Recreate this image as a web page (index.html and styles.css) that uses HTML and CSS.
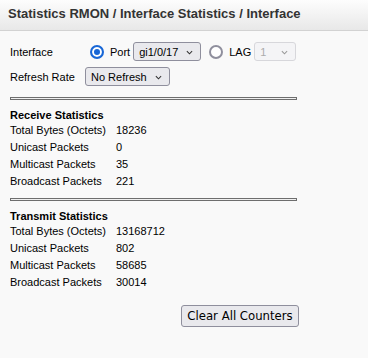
FILE: index.html
```html
<!DOCTYPE html>
<html lang="en">
<head>
	<meta charset="UTF-8">
	<title>Interface Statistics</title>
	<link rel="stylesheet" href="styles.css">
</head>
<body>
	<div class="title">Statistics RMON / Interface Statistics / Interface</div>
	<div class="box">
		<div class="row">
			<span class="lbl">Interface</span>
			<label class="opt"><input type="radio" name="type" checked>Port</label>
			<span class="sel port">
				<select><option>gi1/0/17</option></select>
				<svg viewBox="0 0 8 5"><path d="M1 1l3 3 3-3"/></svg>
			</span>
			<label class="opt lag"><input type="radio" name="type">LAG</label>
			<span class="sel lagsel off">
				<select disabled><option>1</option></select>
				<svg viewBox="0 0 8 5"><path d="M1 1l3 3 3-3"/></svg>
			</span>
		</div>
		<div class="row">
			<span class="lbl">Refresh Rate</span>
			<span class="sel refresh">
				<select><option>No Refresh</option></select>
				<svg viewBox="0 0 8 5"><path d="M1 1l3 3 3-3"/></svg>
			</span>
		</div>

		<hr class="line">

		<table class="stats">
			<tr><th colspan="2">Receive Statistics</th></tr>
			<tr><td class="name">Total Bytes (Octets)</td><td>18236</td></tr>
			<tr><td class="name">Unicast Packets</td><td>0</td></tr>
			<tr><td class="name">Multicast Packets</td><td>35</td></tr>
			<tr><td class="name">Broadcast Packets</td><td>221</td></tr>
		</table>

		<hr class="line">

		<table class="stats">
			<tr><th colspan="2">Transmit Statistics</th></tr>
			<tr><td class="name">Total Bytes (Octets)</td><td>13168712</td></tr>
			<tr><td class="name">Unicast Packets</td><td>802</td></tr>
			<tr><td class="name">Multicast Packets</td><td>58685</td></tr>
			<tr><td class="name">Broadcast Packets</td><td>30014</td></tr>
		</table>

		<div class="btns">
			<button type="button" class="clear">Clear All Counters</button>
		</div>
	</div>
</body>
</html>
```

FILE: styles.css
```css
*{
	margin: 0;
	padding: 0;
	box-sizing: border-box;
}

body{
	background-color: #f9f9f9;
	font-family: "Liberation Sans", Arial, sans-serif;
	font-size: 11px;
	color: #000;
}

.title{
	height: 31px;
	line-height: 27px;
	padding-left: 8px;
	font-size: 13px;
	font-weight: bold;
	color: #333;
	background: linear-gradient(#fdfdfd, #e8e8e8);
	border-bottom: 1px solid #d2d2d2;
}

.box{
	width: 299px;
	padding: 11px 0 0 10px;
}

.row{
	display: flex;
	align-items: center;
	height: 19px;
}

.row + .row{
	margin-top: 6px;
}

.lbl{
	width: 75px;
}

.opt{
	display: flex;
	align-items: center;
}

.opt input{
	appearance: none;
	width: 14px;
	height: 14px;
	margin: 0 6px 0 5px;
	border: 2px solid #8f8f9d;
	border-radius: 50%;
	background-color: #fff;
}

.opt input:checked{
	border-color: #1766d6;
	box-shadow: inset 0 0 0 2px #fff, inset 0 0 0 6px #1766d6;
}

.opt.lag{
	margin-left: 3px;
}

.sel{
	position: relative;
	display: block;
	height: 19px;
	margin-left: 3px;
}

.sel select{
	appearance: none;
	width: 100%;
	height: 19px;
	padding: 0 0 0 5px;
	font-family: "Liberation Sans", Arial, sans-serif;
	font-size: 11px;
	color: #000;
	background-color: #e9e9ed;
	border: 1px solid #8f8f9d;
	border-radius: 3px;
	outline: none;
}

.sel svg{
	position: absolute;
	right: 8px;
	top: 8px;
	width: 7px;
	height: 5px;
	fill: none;
	stroke: #333;
	stroke-width: 1.2;
}

.port{
	width: 68px;
}

.lagsel{
	width: 42px;
}

.off select{
	color: #8a8a8a;
	background-color: #f3f3f5;
	border-color: #c9c9cf;
}

.off svg{
	stroke: #999;
}

.refresh{
	width: 85px;
	margin-left: 0;
}

.line{
	width: 287px;
	height: 3px;
	border: 1px solid #6e6e6e;
	background-color: #f0f0f0;
	margin: 11px 0 8px 0;
}

table{
	border-collapse: collapse;
}

.stats th{
	text-align: left;
	font-weight: bold;
	height: 14px;
	line-height: 14px;
	padding: 0;
}

.stats td{
	height: 17px;
	line-height: 17px;
	padding: 0;
}

.stats .name{
	width: 106px;
}

.stats + .line{
	margin-top: 8px;
}

.btns{
	text-align: right;
	padding-top: 14px;
}

.clear{
	height: 22px;
	width: 118px;
	padding: 0;
	font-family: "DejaVu Sans", Tahoma, sans-serif;
	font-size: 11.7px;
	color: #000;
	background-color: #e9e9ed;
	border: 1px solid #8f8f9d;
	border-radius: 3px;
}
```
